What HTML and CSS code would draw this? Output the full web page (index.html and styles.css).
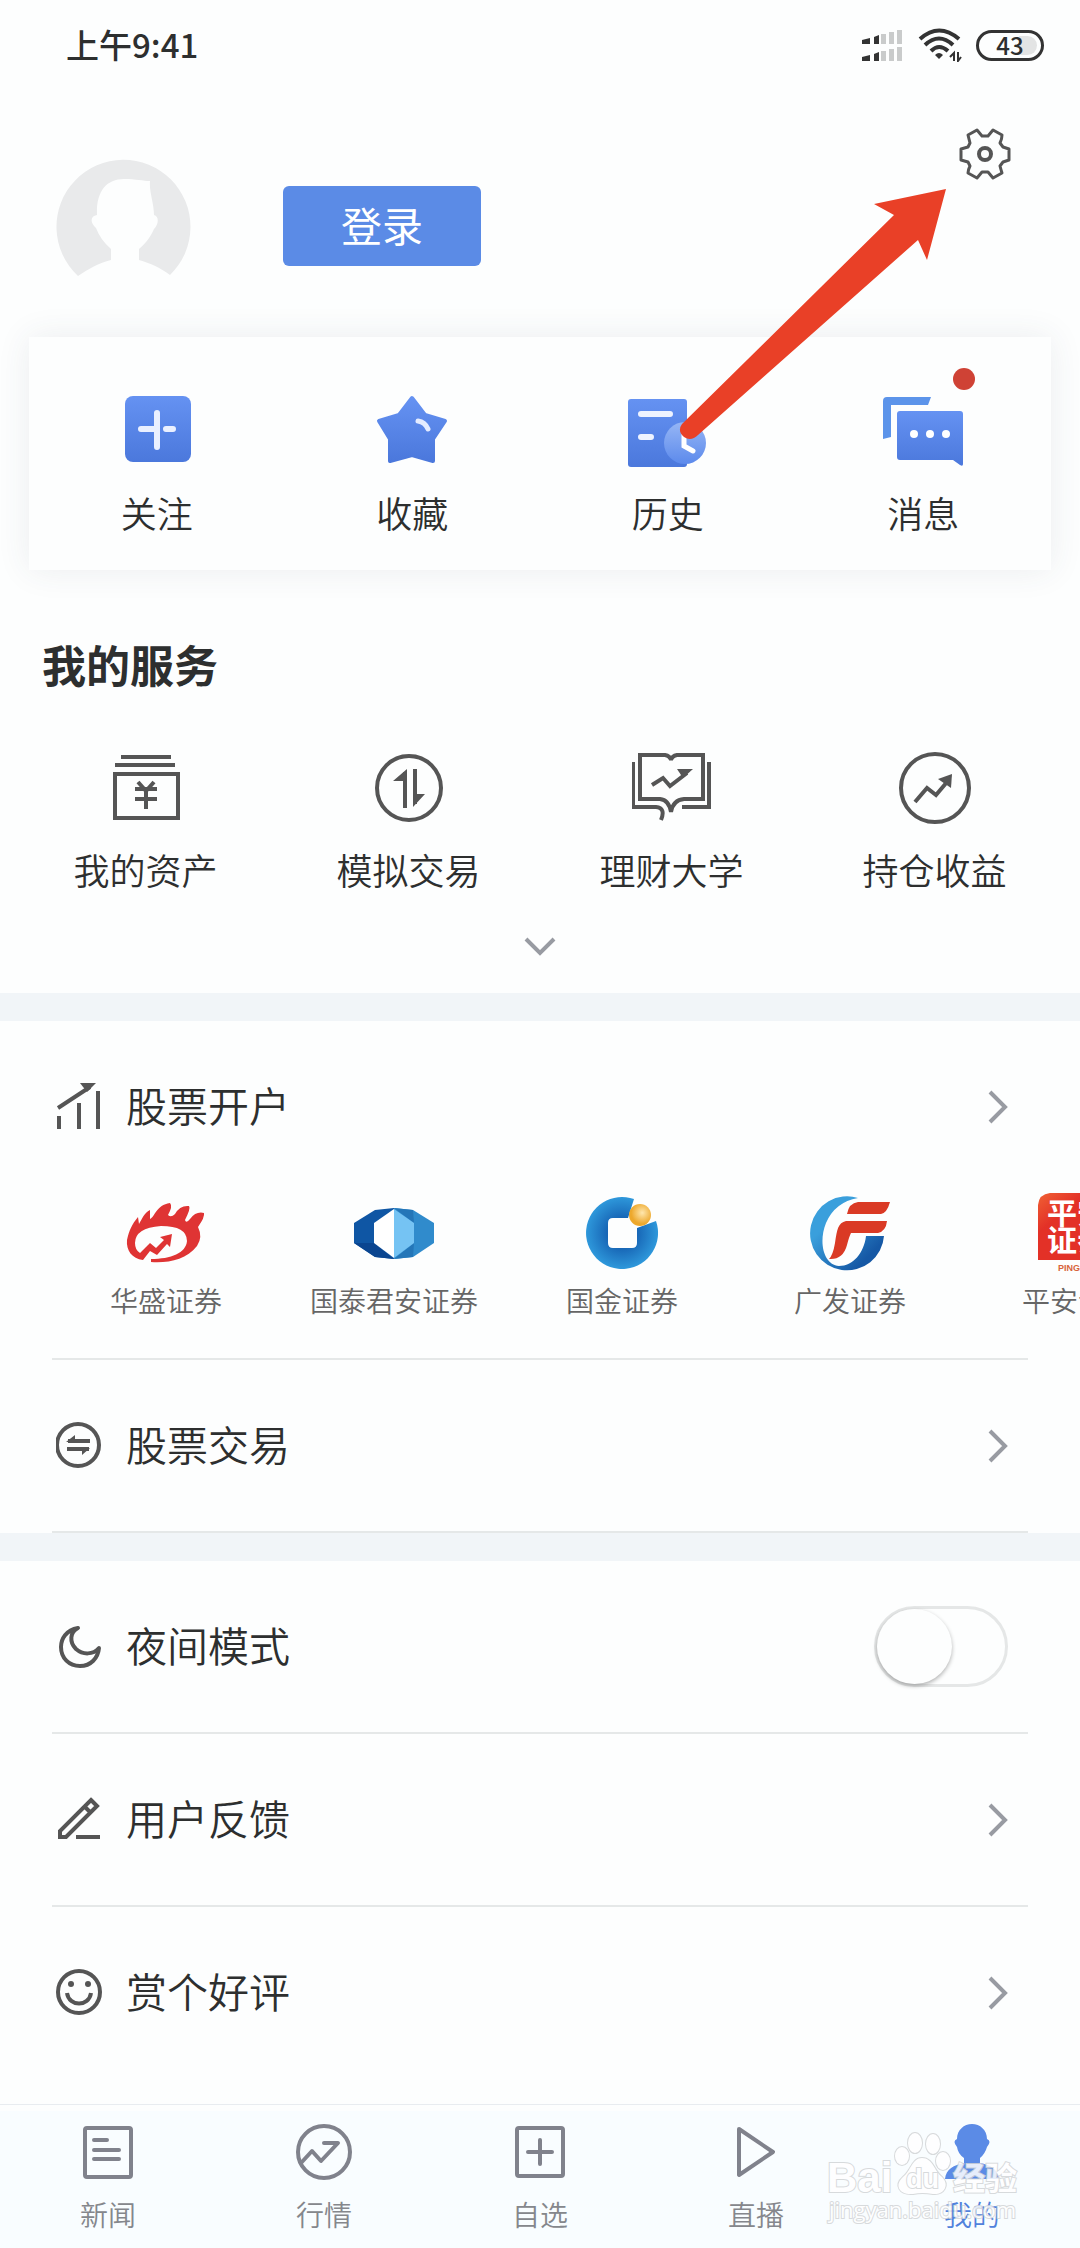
FILE: index.html
```html
<!DOCTYPE html>
<html lang="zh-CN">
<head>
<meta charset="utf-8">
<meta name="viewport" content="width=device-width">
<title>我的</title>
<link rel="stylesheet" href="styles.css">
</head>
<body>
<div class="page">
  <div class="status-bar">
    <span class="status-time">上午9:41</span>
    <div class="status-icons">
      <svg class="signal" viewBox="0 0 42 33">
        <g fill="#333"><path d="M0 11l8-2v6H0zM12 8l5-2v9h-5zM0 28l8-2v6H0zM12 25l5-2v9h-5z"/></g>
        <g fill="#c9cbcb"><path d="M19 5h5v10h-5zM27 3h5v12h-5zM35 1h5v14h-5zM19 22h5v10h-5zM27 20h5v12h-5zM35 18h5v14h-5z"/></g>
      </svg>
      <svg class="wifi" viewBox="0 0 44 34">
        <g fill="none" stroke="#333" stroke-width="4"><path d="M2 11Q21 -6 41 11"/><path d="M7 17Q21 4 35 17"/><path d="M13 23Q21 15 30 23"/></g>
        <path d="M17 27Q21 23 25 27L21 31Z" fill="#333"/>
        <path d="M32 29l4-4v8M40 24v9l3-4" fill="none" stroke="#333" stroke-width="2"/>
      </svg>
      <span class="battery">43</span>
    </div>
  </div>

  <header class="profile">
    <div class="account">
      <svg class="avatar" viewBox="0 0 135 134">
        <path fill="#e9eaeb" d="M22 117A67 67 0 1 1 114 116C105 109 94 104 83 101V90C91 83 95 77 98 70C103 65 103 57 98 56C98 44 93 33 94 22C87 22 80 20 68 20C50 20 40 33 41 56C34 57 34 64 40 69C43 77 48 84 55 90V101C43 104 32 110 22 117Z"/>
      </svg>
      <button class="login" type="button">登录</button>
    </div>
    <button class="icon-button" type="button" aria-label="设置">
      <svg class="gear" viewBox="0 0 52 52" fill="none" stroke="#555" stroke-width="3" stroke-linejoin="round">
        <path d="M18 2L9 7Q10 11 11 15L9 19L2 21V32L9 34L11 38Q9 42 9 45L18 50L23 44H29L34 50L43 45Q42 42 41 38L44 34L50 32V21L44 19L41 15Q43 11 43 7L34 2L29 8H23Z"/><circle cx="26" cy="26" r="6" stroke-width="4"/>
      </svg>
    </button>
  </header>

  <nav class="card">
    <a class="entry" href="#">
      <svg class="entry-icon" viewBox="0 0 80 72">
        <defs><linearGradient id="blue" x1="0" y1="0" x2="0" y2="1"><stop offset="0" stop-color="#6592f2"/><stop offset="1" stop-color="#4b78dc"/></linearGradient></defs>
        <rect x="8" y="1" width="66" height="66" rx="8" fill="url(#blue)"/>
        <path d="M24 34h15M49 34h7M40 18v34" stroke="#eaf0ff" stroke-width="6" stroke-linecap="round"/>
      </svg>
      <span>关注</span>
    </a>
    <a class="entry" href="#">
      <svg class="entry-icon" viewBox="0 0 80 72">
        <path d="M40 3L53 20L73 26L61 44V66L40 60L18 66V44L7 26L27 20Z" fill="url(#blue)" stroke="url(#blue)" stroke-width="4" stroke-linejoin="round"/>
        <path d="M46 26Q53 27 56 34" fill="none" stroke="#e4ecff" stroke-width="5" stroke-linecap="round"/>
      </svg>
      <span>收藏</span>
    </a>
    <a class="entry" href="#">
      <svg class="entry-icon" viewBox="0 0 80 72">
        <defs><linearGradient id="clock" x1="0" y1="0" x2="0" y2="1"><stop offset="0" stop-color="#96b6f5"/><stop offset="1" stop-color="#5c8aec"/></linearGradient></defs>
        <rect x="0" y="4" width="59" height="68" rx="3" fill="url(#blue)"/>
        <path d="M13 19h29M13 42h10" stroke="#eef3ff" stroke-width="6" stroke-linecap="round"/>
        <circle cx="57" cy="48" r="21" fill="url(#clock)"/>
        <path d="M56 38v13l9 5" fill="none" stroke="#fff" stroke-width="5" stroke-linecap="round"/>
      </svg>
      <span>历史</span>
    </a>
    <a class="entry" href="#">
      <span class="entry-badge">
        <svg class="entry-icon" viewBox="0 0 80 72">
          <path d="M0 44V6Q0 2 4 2H48L45 10H8V42Z" fill="#5c94ea"/>
          <path d="M17 16H77Q80 16 80 19V69Q80 72 77 70L70 65H17Q14 65 14 62V19Q14 16 17 16Z" fill="url(#blue)"/>
          <g fill="#fff"><circle cx="31" cy="39" r="4"/><circle cx="47" cy="39" r="4"/><circle cx="63" cy="39" r="4"/></g>
        </svg>
        <i class="dot"></i>
      </span>
      <span>消息</span>
    </a>
  </nav>

  <section class="services">
    <h2>我的服务</h2>
    <div class="service-grid">
      <a class="service" href="#">
        <svg class="entry-icon line" viewBox="0 0 80 72"><path d="M15 5h50M9 13h60M9 22h63v44H9z"/><path d="M32 30l8 9 8-9M40 38v19M29 37h22M29 47h22"/></svg>
        <span>我的资产</span>
      </a>
      <a class="service" href="#">
        <svg class="entry-icon line" viewBox="0 0 80 72"><ellipse cx="40" cy="36" rx="32" ry="32"/><path d="M36 56V20M46 17v35"/><path class="solid" d="M24 29L38 17V29ZM44 55V42H56Z"/></svg>
        <span>模拟交易</span>
      </a>
      <a class="service" href="#">
        <svg class="entry-icon line" viewBox="0 0 80 72"><path d="M8 3H33Q38 4 39 8Q40 4 45 3H71V47H52Q41 48 39 60Q37 48 28 47H8Z"/><path d="M1 10V55H24Q34 56 29 68M77 10V55H50M20 33L31 26L38 34L55 21"/><path class="solid" d="M45 17H61L51 26Z"/></svg>
        <span>理财大学</span>
      </a>
      <a class="service" href="#">
        <svg class="entry-icon line" viewBox="0 0 80 72"><circle cx="40" cy="36" r="34"/><path d="M20 50L32 36L41 43L52 30"/><path class="solid" d="M43 27L57 22L56 36Z"/></svg>
        <span>持仓收益</span>
      </a>
    </div>
    <button class="expand" type="button" aria-label="展开">
      <svg class="chevron-down" viewBox="0 0 32 20"><path d="M2 2L16 16L30 2"/></svg>
    </button>
  </section>

  <section class="group">
    <a class="row" href="#">
      <svg class="row-icon line" viewBox="0 0 46 48"><path d="M3 33v13M23 20v26M42 8v38M2 25L34 4"/><path class="solid" d="M24 0H40L31 9Z"/></svg>
      <span class="row-label">股票开户</span>
      <svg class="chevron" viewBox="0 0 20 34"><path d="M2 2L17 17L2 32"/></svg>
    </a>
    <ul class="brokers">
      <li><a class="broker" href="#">
        <svg class="broker-logo" viewBox="0 0 80 80">
          <path fill="#df3434" d="M17 67C6 66 0 57 1 47C3 38 6 31 12 24L13 31C16 26 18 20 24 17V26C29 24 30 12 44 10Q47 13 42 22Q45 25 49 21Q54 12 63 13Q65 15 59 27Q60 31 64 26Q70 18 78 20Q79 24 72 34Q77 44 71 53C60 67 43 70 25 69V66C45 66 60 60 61 48Q61 33 35 33Q9 35 9 50Q9 57 14 60L24 50L30 55L38 47L34 44L46 41L44 54L41 51L31 62L24 58Z"/>
        </svg>
        <span>华盛证券</span></a></li>
      <li><a class="broker" href="#">
        <svg class="broker-logo" viewBox="0 0 80 80">
          <path fill="#0f56a4" d="M40 15L21 17L0 30V50L21 64L40 66Z"/><path fill="#0a4590" d="M20 50L40 66L21 64L0 50Z"/>
          <path fill="#308bcc" d="M40 15L59 17L80 30V50L59 64L40 66Z"/><path fill="#2476b8" d="M40 15L59 17L60 30ZM60 50L40 66L59 64Z"/>
          <path fill="#fff" d="M40 16L20 30V50L40 65Z"/><path fill="#75c3f3" d="M40 16L60 30V50L40 65Z"/>
        </svg>
        <span>国泰君安证券</span></a></li>
      <li><a class="broker" href="#">
        <svg class="broker-logo" viewBox="0 0 80 80">
          <defs>
            <radialGradient id="ring"><stop offset=".4" stop-color="#1765b5"/><stop offset="1" stop-color="#2e98db"/></radialGradient>
            <radialGradient id="ball" cx=".6" cy=".4"><stop offset="0" stop-color="#ffe7ae"/><stop offset="1" stop-color="#eda82c"/></radialGradient>
          </defs>
          <path fill="url(#ring)" fill-rule="evenodd" d="M52 6L46 25H31Q26 25 26 30V50Q26 55 31 55H50Q55 55 55 50V35L74 28A36 36 0 1 1 52 6Z"/>
          <circle cx="58" cy="22" r="11" fill="url(#ball)"/>
        </svg>
        <span>国金证券</span></a></li>
      <li><a class="broker" href="#">
        <svg class="broker-logo" viewBox="0 0 80 80">
          <defs><linearGradient id="gf" x1="0" y1="0" x2="1" y2="1"><stop offset=".3" stop-color="#3a9fdc"/><stop offset=".8" stop-color="#1558a5"/></linearGradient></defs>
          <path fill="url(#gf)" d="M48 5A37 37 0 1 0 74 43H56C54 60 43 73 29 73C14 72 8 50 16 30Q25 9 48 5Z"/>
          <path fill="#da3a25" d="M48 9H80Q77 20 71 21H37Q39 10 48 9ZM36 28H77Q76 38 68 40H41Q39 44 37 52Q33 67 19 66Q23 62 25 50C27 36 28 30 36 28Z"/>
        </svg>
        <span>广发证券</span></a></li>
      <li><a class="broker" href="#">
        <svg class="broker-logo" viewBox="0 0 80 80">
          <defs><linearGradient id="pa" x1="0" y1="0" x2="1" y2="1"><stop offset="0" stop-color="#f06134"/><stop offset=".3" stop-color="#e33127"/></linearGradient></defs>
          <path fill="url(#pa)" d="M12 0H80V67H0V12Q1 1 12 0Z"/>
          <text class="pa-name" x="9" y="31">平安</text><text class="pa-name" x="9" y="58">证券</text>
          <text class="pa-latin" x="20" y="78">PING AN</text>
        </svg>
        <span>平安证券</span></a></li>
    </ul>
    <hr>
    <a class="row" href="#">
      <svg class="row-icon line" viewBox="0 0 46 48"><circle cx="22" cy="23" r="21"/><path d="M12 19H34M11 27H33"/><path class="solid" d="M10 20L19 13V20ZM34 26L26 33V26Z"/></svg>
      <span class="row-label">股票交易</span>
      <svg class="chevron" viewBox="0 0 20 34"><path d="M2 2L17 17L2 32"/></svg>
    </a>
    <hr>
  </section>

  <section class="group">
    <div class="row">
      <svg class="row-icon line" viewBox="0 0 46 48"><path stroke-linejoin="round" d="M22 5C10 7 5 16 5 24C5 35 13 43 24 43C35 43 42 35 43 25C37 32 27 32 20 26C13 19 14 9 22 5Z"/></svg>
      <label class="row-label" for="night">夜间模式</label>
      <input class="toggle" id="night" type="checkbox" role="switch">
    </div>
    <hr>
    <a class="row" href="#">
      <svg class="row-icon line" viewBox="0 0 46 48"><path d="M35 4L41 10L10 41H4V35ZM28 10L35 17M20 41H44"/></svg>
      <span class="row-label">用户反馈</span>
      <svg class="chevron" viewBox="0 0 20 34"><path d="M2 2L17 17L2 32"/></svg>
    </a>
    <hr>
    <a class="row" href="#">
      <svg class="row-icon line" viewBox="0 0 46 48"><circle cx="23" cy="23" r="21"/><path d="M11 24C13 38 33 38 35 24"/><circle class="solid" cx="15" cy="15" r="3"/><circle class="solid" cx="32" cy="15" r="3"/></svg>
      <span class="row-label">赏个好评</span>
      <svg class="chevron" viewBox="0 0 20 34"><path d="M2 2L17 17L2 32"/></svg>
    </a>
  </section>

  <nav class="tabs">
    <a class="tab" href="#"><svg class="tab-icon" viewBox="0 0 56 56"><rect x="5" y="4" width="46" height="49" rx="2"/><path d="M14 16H27M14 26H39M14 35H39"/></svg><span>新闻</span></a>
    <a class="tab" href="#"><svg class="tab-icon" viewBox="0 0 56 56"><circle cx="28" cy="28" r="26"/><path d="M5 39L16 27L25 37L42 19H28"/></svg><span>行情</span></a>
    <a class="tab" href="#"><svg class="tab-icon" viewBox="0 0 56 56"><rect x="5" y="4" width="46" height="48" rx="2"/><path d="M16 28H40M28 16V40"/></svg><span>自选</span></a>
    <a class="tab" href="#"><svg class="tab-icon" viewBox="0 0 56 56"><path d="M11 5L45 28L11 51Z"/></svg><span>直播</span></a>
    <a class="tab active" href="#"><svg class="tab-icon" viewBox="0 0 56 56"><path d="M28 0C36 0 43 6 43 15Q48 17 43 23Q41 30 36 34V39C46 41 54 45 55 55H1C2 45 10 41 20 39V34Q14 30 13 23Q8 17 13 15C13 6 20 0 28 0Z"/></svg><span>我的</span></a>
    <svg class="watermark" viewBox="0 0 200 100" aria-hidden="true">
      <text class="wm-latin" x="3" y="64">Bai</text>
      <ellipse cx="78" cy="28" rx="7" ry="9"/><ellipse cx="91" cy="15" rx="7" ry="10"/><ellipse cx="109" cy="16" rx="7" ry="10"/><ellipse cx="119" cy="33" rx="7" ry="9"/>
      <path d="M98 30C109 30 110 43 118 49C126 57 120 67 109 66Q98 64 89 66C75 67 70 57 79 49C87 43 88 30 98 30Z"/>
      <text class="wm-du" x="82" y="60">du</text>
      <text class="wm-han" x="129" y="62">经验</text>
      <text class="wm-url" x="5" y="90">jingyan.baidu.com</text>
    </svg>
  </nav>

  <svg class="pointer" viewBox="0 0 270 256" aria-hidden="true"><path fill="#e94027" d="M268 2L249 73L240 53L20 248Q13 255 6 250Q-1 244 4 237L216 28L196 17Z"/></svg>
</div>
</body>
</html>
```
FILE: styles.css
```css
* { box-sizing: border-box; }

body {
  margin: 0;
  background: #fdfefe;
  color: #2d2f2f;
  font-family: "Noto Sans CJK SC", sans-serif;
  font-size: 36px;
  font-weight: 350;
  line-height: 48px;
}

a { color: inherit; text-decoration: none; }
button { border: 0; padding: 0; background: none; font-family: inherit; }
svg { display: block; flex: none; }

hr {
  height: 2px;
  margin: 0 52px;
  border: 0;
  background: #e5e8e8;
}

.page {
  position: relative;
  display: flex;
  flex-direction: column;
  min-height: 100vh;
  overflow: hidden;
}

/* status bar */
.status-bar {
  display: flex;
  justify-content: space-between;
  align-items: center;
  height: 90px;
  padding: 0 36px 0 66px;
}
.status-time { padding-bottom: 2px; font-size: 33px; font-weight: 500; }
.status-icons { display: flex; align-items: center; gap: 14px; }
.signal { width: 42px; height: 33px; }
.wifi { width: 44px; height: 34px; }
.battery {
  position: relative;
  width: 68px;
  height: 31px;
  border: 3px solid #333;
  border-radius: 16px;
  font-size: 24px;
  font-weight: 500;
  line-height: 24px;
  text-align: center;
}
.battery::before {
  content: "";
  position: absolute;
  z-index: -1;
  top: 3px;
  right: 4px;
  width: 18px;
  height: 19px;
  border-radius: 0 10px 10px 0;
  background: #e3e4e4;
}

/* profile */
.profile {
  display: flex;
  justify-content: space-between;
  align-items: flex-start;
  padding: 38px 69px 44px 56px;
}
.account { display: flex; align-items: center; gap: 92px; padding-top: 31px; }
.avatar { width: 135px; height: 134px; }
.login {
  width: 198px;
  height: 80px;
  padding-bottom: 4px;
  border-radius: 6px;
  background: #5b8be6;
  color: #fff;
  font-size: 41px;
  line-height: 60px;
}
.gear { width: 52px; height: 52px; }

/* shortcut card */
.card {
  display: grid;
  grid-template-columns: repeat(4, 1fr);
  margin: 0 29px;
  padding: 58px 0 34px;
  background: #fdfefe;
  box-shadow: 0 0 32px rgba(50, 70, 90, .09);
}
.entry, .service { display: flex; flex-direction: column; align-items: center; gap: 21px; }
.entry-icon { width: 80px; height: 72px; }
.entry-badge { position: relative; }
.dot {
  position: absolute;
  top: -27px;
  left: 70px;
  width: 22px;
  height: 22px;
  border-radius: 50%;
  background: #cf4235;
}

.line { fill: none; stroke: #555; stroke-width: 4; }
.line .solid { fill: #555; stroke: none; }

/* services */
.services { display: flex; flex-direction: column; padding: 64px 14px 26px; }
.services h2 { margin: 0 0 58px 28px; font-size: 44px; font-weight: 700; line-height: 60px; }
.service-grid { display: grid; grid-template-columns: repeat(4, 1fr); }
.expand { align-self: center; margin-top: 34px; padding: 10px; }
.chevron-down { width: 32px; height: 20px; }
.chevron, .chevron-down { fill: none; stroke: #989ba2; stroke-width: 4; }

/* list rows */
.group { border-top: 28px solid #f1f5f8; }
.row {
  display: flex;
  align-items: center;
  height: 171px;
  padding: 0 72px 0 56px;
  font-size: 41px;
  line-height: 60px;
}
.row-icon { width: 46px; height: 48px; margin-right: 24px; }
.row-label { flex: 1; padding-bottom: 5px; }
.chevron { width: 20px; height: 34px; }

.toggle {
  appearance: none;
  width: 134px;
  height: 81px;
  margin: 0;
  border: 3px solid #e5e7e7;
  border-radius: 41px;
}
.toggle::before {
  content: "";
  display: block;
  width: 75px;
  height: 75px;
  border-radius: 50%;
  background: #fdfefe;
  box-shadow: 0 2px 4px rgba(0, 0, 0, .3);
}
.toggle:checked { background: #5b8be6; }
.toggle:checked::before { margin-left: auto; }

/* brokers */
.brokers {
  display: flex;
  margin: 0;
  padding: 1px 0 40px 52px;
  overflow: hidden;
  list-style: none;
  color: #666;
  font-size: 28px;
  line-height: 36px;
}
.brokers li { flex: 0 0 228px; }
.broker { display: flex; flex-direction: column; align-items: center; gap: 9px; }
.broker-logo { width: 80px; height: 80px; }
.pa-name { fill: #fff; font-size: 30px; font-weight: 700; }
.pa-latin { fill: #d8643c; font: 700 9px "Liberation Sans", sans-serif; }

/* tab bar */
.tabs {
  position: relative;
  display: grid;
  grid-template-columns: repeat(5, 1fr);
  margin-top: auto;
  padding: 19px 0 16px;
  border-top: 1px solid #e8ecf0;
  background: linear-gradient(#fdfefe 6px, #f9fdff 6px);
}
.tab {
  display: flex;
  flex-direction: column;
  align-items: center;
  gap: 16px;
  color: #85878c;
  font-size: 28px;
  line-height: 36px;
}
.tab-icon {
  width: 56px;
  height: 56px;
  fill: none;
  stroke: #80828c;
  stroke-width: 4;
  stroke-linecap: round;
  stroke-linejoin: round;
}
.active { color: #5182dc; }
.active .tab-icon { fill: #5b8be6; stroke: none; }

.watermark {
  position: absolute;
  right: 56px;
  bottom: 20px;
  width: 200px;
  height: 100px;
  overflow: visible;
  fill: #fff;
  stroke: #d2d4d6;
  stroke-width: 2;
  paint-order: stroke;
  opacity: .85;
}
.wm-latin { font: 700 42px "Liberation Sans", sans-serif; }
.wm-du { font: 700 27px "Liberation Sans", sans-serif; }
.wm-han { font-size: 32px; font-weight: 700; }
.wm-url { font: 400 22px "Open Sans", sans-serif; }

/* annotation arrow */
.pointer { position: absolute; top: 187px; right: 132px; width: 270px; height: 256px; }
```
